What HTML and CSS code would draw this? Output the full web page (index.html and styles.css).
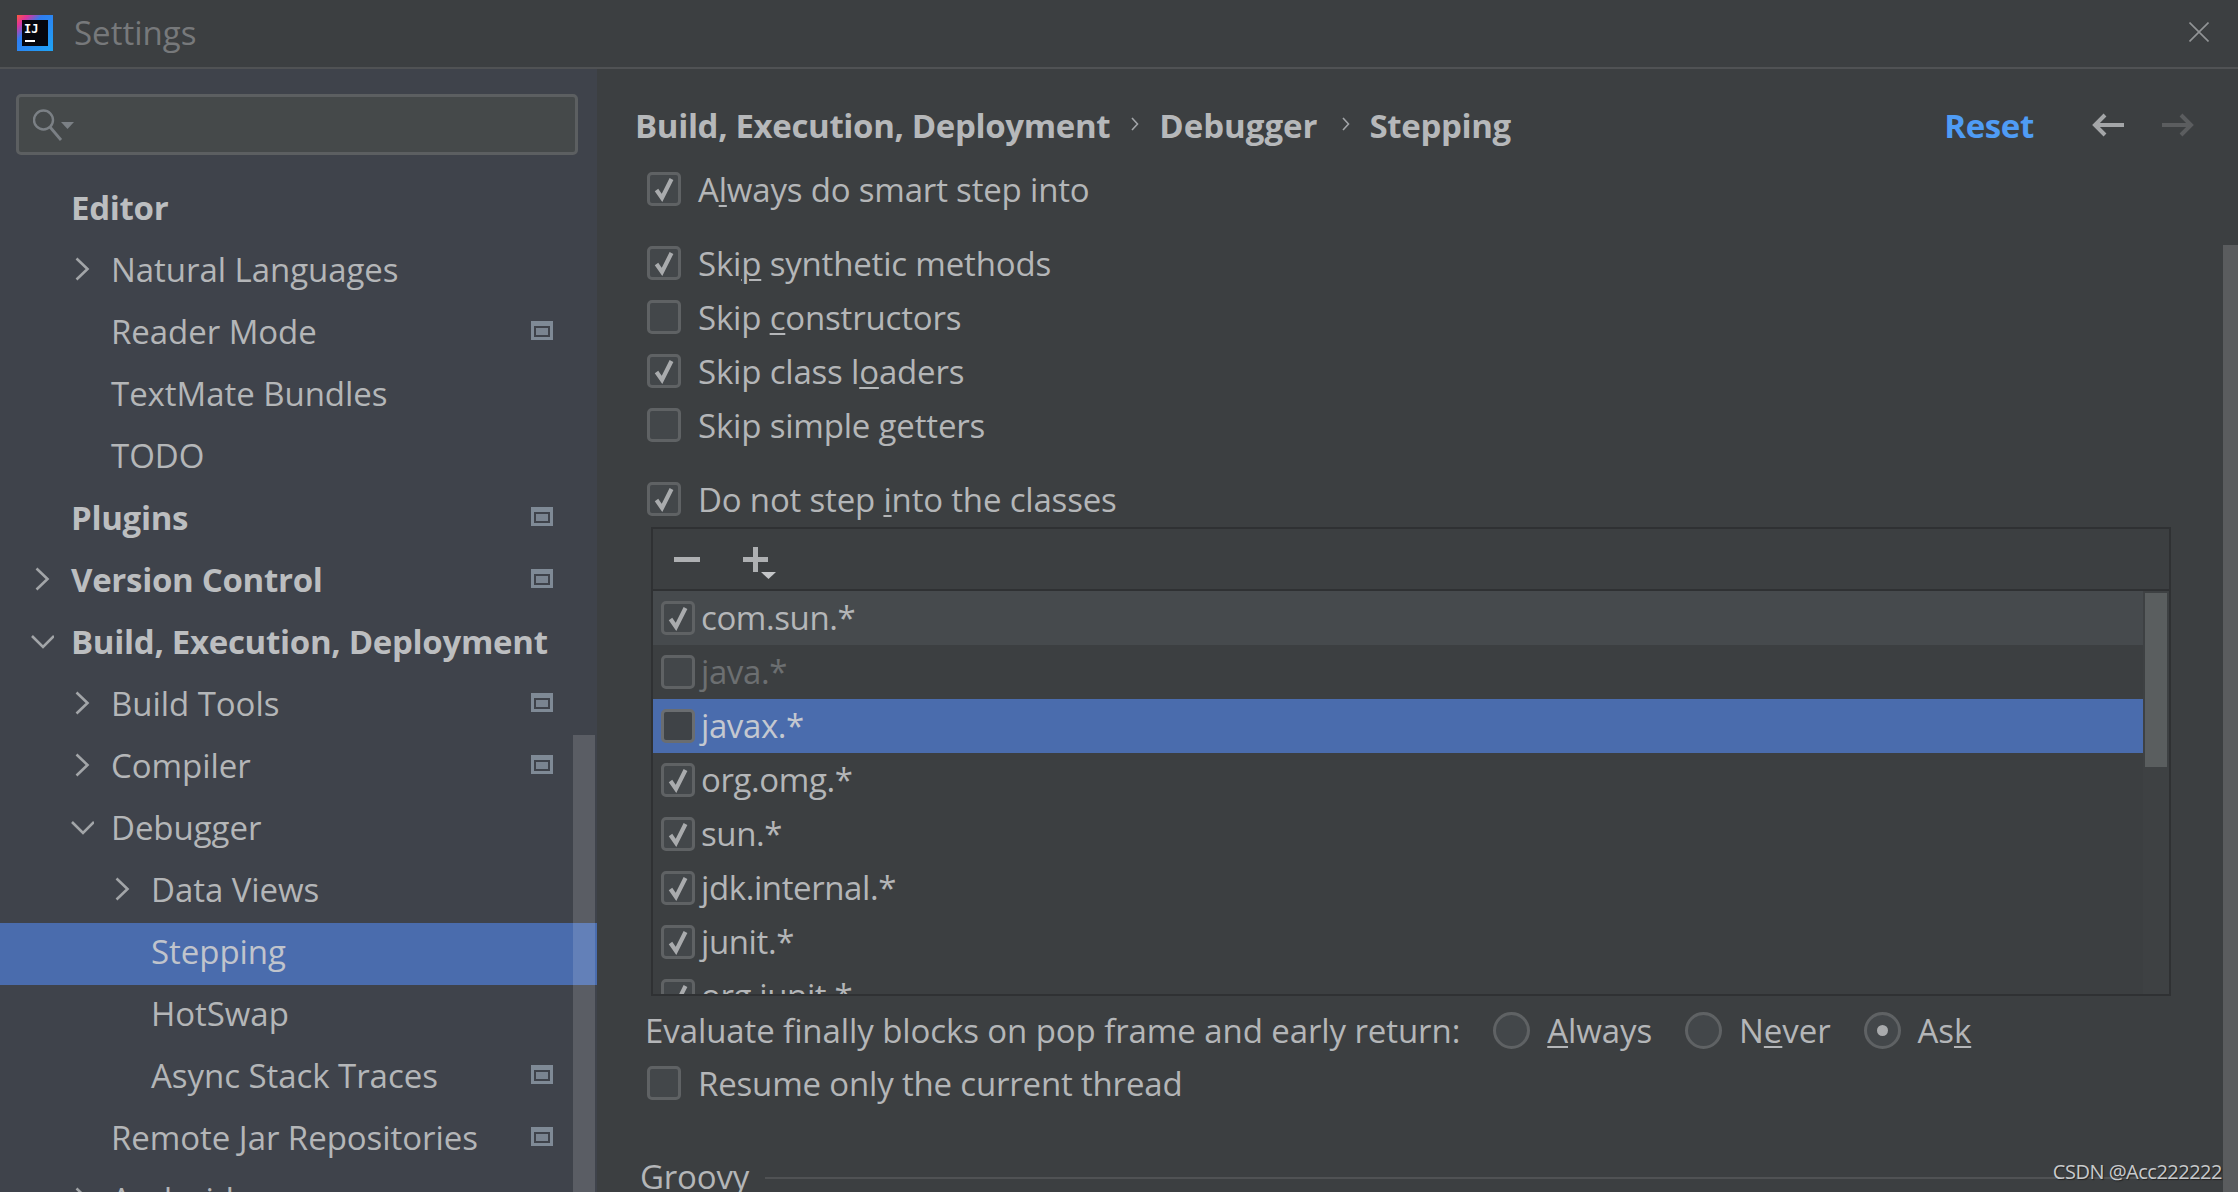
FILE: index.html
```html
<!DOCTYPE html>
<html lang="en">
<head>
<meta charset="utf-8">
<title>Settings</title>
<link rel="stylesheet" href="styles.css">
</head>
<body>
<svg class="defs" width="0" height="0" aria-hidden="true">
  <defs>
    <linearGradient id="logo-grad" x1="0" y1="0" x2="1" y2="1">
      <stop offset="0" stop-color="#ff5a3c"/>
      <stop offset="0.16" stop-color="#e0339a"/>
      <stop offset="0.36" stop-color="#2f7df0"/>
      <stop offset="1" stop-color="#1ea4f5"/>
    </linearGradient>
    <symbol id="chev-r" viewBox="0 0 24 24"><path d="M6.500 1.500 17.500 12 6.500 22.500" fill="none" stroke="#a2a5a8" stroke-width="2.600"/></symbol>
    <symbol id="chev-d" viewBox="0 0 24 24"><path d="M2 7 13 18 24 7" fill="none" stroke="#a2a5a8" stroke-width="2.600"/></symbol>
    <symbol id="cfg" viewBox="0 0 22 19"><rect width="22" height="19" fill="#7f8a96"/><rect x="3" y="5" width="16" height="11" fill="#3f434b"/><rect x="5" y="7" width="12" height="7" fill="#7a8490"/></symbol>
    <symbol id="tick" viewBox="0 0 34 34"><path d="M9.500 18 15 26 24.500 7" fill="none" stroke="#a9abad" stroke-width="4.200"/></symbol>
  </defs>
</svg>

<div class="window">
  <header class="titlebar">
    <svg class="logo" width="36" height="36" viewBox="0 0 36 36">
      <rect width="36" height="36" fill="url(#logo-grad)"/>
      <rect x="5" y="5" width="26" height="26" fill="#06060c"/>
      <text x="7" y="18" class="logo-text">IJ</text>
      <rect x="8" y="25" width="10" height="2" fill="#fff"/>
    </svg>
    <span class="title">Settings</span>
    <svg class="close" width="20" height="20" viewBox="0 0 20 20"><path d="M0.500 0.500 19.500 19.500M19.500 0.500 0.500 19.500" stroke="#929496" stroke-width="1.600"/></svg>
  </header>

  <div class="content">
    <aside class="sidebar">
      <div class="search">
        <svg width="44" height="34" viewBox="0 0 44 34">
          <circle cx="10.500" cy="11" r="9.500" fill="none" stroke="#7b8085" stroke-width="2.400"/>
          <path d="M17 18 28 31" stroke="#7b8085" stroke-width="2.800"/>
          <path d="M28 13H41L34.500 20Z" fill="#7b8085"/>
        </svg>
      </div>
      <nav class="tree">
        <div class="row l0 bold"><span class="slot"></span><span>Editor</span></div>
        <div class="row l1"><span class="slot"><svg class="chev"><use href="#chev-r"/></svg></span><span>Natural Languages</span></div>
        <div class="row l1"><span class="slot"></span><span>Reader Mode</span><svg class="cfg"><use href="#cfg"/></svg></div>
        <div class="row l1"><span class="slot"></span><span>TextMate Bundles</span></div>
        <div class="row l1"><span class="slot"></span><span>TODO</span></div>
        <div class="row l0 bold"><span class="slot"></span><span>Plugins</span><svg class="cfg"><use href="#cfg"/></svg></div>
        <div class="row l0 bold"><span class="slot"><svg class="chev"><use href="#chev-r"/></svg></span><span>Version Control</span><svg class="cfg"><use href="#cfg"/></svg></div>
        <div class="row l0 bold"><span class="slot"><svg class="chev"><use href="#chev-d"/></svg></span><span>Build, Execution, Deployment</span></div>
        <div class="row l1"><span class="slot"><svg class="chev"><use href="#chev-r"/></svg></span><span>Build Tools</span><svg class="cfg"><use href="#cfg"/></svg></div>
        <div class="row l1"><span class="slot"><svg class="chev"><use href="#chev-r"/></svg></span><span>Compiler</span><svg class="cfg"><use href="#cfg"/></svg></div>
        <div class="row l1"><span class="slot"><svg class="chev"><use href="#chev-d"/></svg></span><span>Debugger</span></div>
        <div class="row l2"><span class="slot"><svg class="chev"><use href="#chev-r"/></svg></span><span>Data Views</span></div>
        <div class="row l2 selected"><span class="slot"></span><span>Stepping</span></div>
        <div class="row l2"><span class="slot"></span><span>HotSwap</span></div>
        <div class="row l2"><span class="slot"></span><span>Async Stack Traces</span><svg class="cfg"><use href="#cfg"/></svg></div>
        <div class="row l1"><span class="slot"></span><span>Remote Jar Repositories</span><svg class="cfg"><use href="#cfg"/></svg></div>
        <div class="row l1"><span class="slot"><svg class="chev"><use href="#chev-r"/></svg></span><span>Android</span></div>
      </nav>
      <div class="side-scroll"></div>
    </aside>

    <main class="main">
      <div class="crumbs">
        <span class="crumb crumb-first">Build, Execution, Deployment</span>
        <svg class="sep sep-first" width="8" height="14" viewBox="0 0 8 14"><path d="M1 1 6.500 7 1 13" fill="none" stroke="#a2a5a8" stroke-width="1.600"/></svg>
        <span class="crumb crumb-second">Debugger</span>
        <svg class="sep" width="8" height="14" viewBox="0 0 8 14"><path d="M1 1 6.500 7 1 13" fill="none" stroke="#a2a5a8" stroke-width="1.600"/></svg>
        <span class="crumb">Stepping</span>
        <span class="reset">Reset</span>
        <svg class="arrow" width="32" height="24" viewBox="0 0 32 24"><path d="M32 12H3M13 2 3 12 13 22" fill="none" stroke="#a4a6a8" stroke-width="4"/></svg>
        <svg class="arrow arrow-next" width="32" height="24" viewBox="0 0 32 24"><path d="M0 12H29M19 2 29 12 19 22" fill="none" stroke="#5b5d5f" stroke-width="4"/></svg>
      </div>

      <div class="settings">
        <label class="check"><span class="box"><svg class="tick"><use href="#tick"/></svg></span><span>A<u>l</u>ways do smart step into</span></label>

        <div class="group">
          <label class="check"><span class="box"><svg class="tick"><use href="#tick"/></svg></span><span>Ski<u>p</u> synthetic methods</span></label>
          <label class="check"><span class="box"></span><span>Skip <u>c</u>onstructors</span></label>
          <label class="check"><span class="box"><svg class="tick"><use href="#tick"/></svg></span><span>Skip class l<u>o</u>aders</span></label>
          <label class="check"><span class="box"></span><span>Skip simple <u>g</u>etters</span></label>
        </div>

        <label class="check"><span class="box"><svg class="tick"><use href="#tick"/></svg></span><span>Do not step <u>i</u>nto the classes</span></label>

        <section class="table">
          <div class="toolbar">
            <svg width="26" height="5" viewBox="0 0 26 5"><rect width="26" height="5" fill="#aeb0b2"/></svg>
            <svg class="add" width="33" height="32" viewBox="0 0 33 32"><path d="M0 12.500H25M12.500 0V25" stroke="#aeb0b2" stroke-width="5"/><path d="M18 25H33L25.500 32Z" fill="#c4c6c8"/></svg>
          </div>
          <div class="list-wrap">
            <div class="list">
              <div class="item hover"><span class="box"><svg class="tick"><use href="#tick"/></svg></span><span class="item-text">com.sun.*</span></div>
              <div class="item off"><span class="box"></span><span class="item-text">java.*</span></div>
              <div class="item selected"><span class="box"></span><span class="item-text">javax.*</span></div>
              <div class="item"><span class="box"><svg class="tick"><use href="#tick"/></svg></span><span class="item-text">org.omg.*</span></div>
              <div class="item"><span class="box"><svg class="tick"><use href="#tick"/></svg></span><span class="item-text">sun.*</span></div>
              <div class="item"><span class="box"><svg class="tick"><use href="#tick"/></svg></span><span class="item-text">jdk.internal.*</span></div>
              <div class="item"><span class="box"><svg class="tick"><use href="#tick"/></svg></span><span class="item-text">junit.*</span></div>
              <div class="item"><span class="box"><svg class="tick"><use href="#tick"/></svg></span><span class="item-text">org.junit.*</span></div>
            </div>
            <div class="list-scroll"><div class="list-thumb"></div></div>
          </div>
        </section>

        <div class="radios">
          <span class="radio-label">Evaluate finally blocks on pop frame and early return:</span>
          <span class="radio"><span class="circle"></span><span><u>A</u>lways</span></span>
          <span class="radio"><span class="circle"></span><span>N<u>e</u>ver</span></span>
          <span class="radio"><span class="circle on"></span><span>As<u>k</u></span></span>
        </div>

        <label class="check check-last"><span class="box"></span><span>Resume only the current thread</span></label>

        <div class="groovy"><span>Groovy</span><span class="rule"></span></div>
      </div>
      <div class="main-scroll"></div>
    </main>
  </div>
  <div class="watermark">CSDN @Acc222222</div>
</div>
</body>
</html>
```
FILE: styles.css
```css
* { box-sizing: border-box; }
html, body { margin: 0; height: 100%; background: #3c3f41; }
body { overflow: hidden; font-family: "Open Sans", "Noto Sans", sans-serif; font-size: 33px; color: #b4b6b8; }
.defs { position: absolute; }
u { text-decoration-thickness: 2px; text-underline-offset: 3px; }

.window { position: relative; height: 1192px; display: flex; flex-direction: column; overflow: hidden; }

.titlebar { height: 69px; flex: none; display: flex; align-items: center; padding: 0 29px 2px 17px; border-bottom: 2px solid #505254; }
.logo-text { font-family: "DejaVu Sans Mono", monospace; font-weight: 700; font-size: 12px; letter-spacing: 0; fill: #fff; }
.title { margin-left: 21px; color: #77797b; }
.close { margin-left: auto; margin-bottom: 2px; }

.content { flex: 1; display: flex; min-height: 0; }

.sidebar { position: relative; width: 597px; flex: none; background: #3f434b; padding-top: 25px; overflow: hidden; letter-spacing: -0.05px; }
.search { height: 61px; margin: 0 19px 24px 16px; border: 3px solid #5c5f61; border-radius: 5px; background: #45494a; display: flex; align-items: center; padding-left: 14px; }
.search svg { margin-top: 2px; }

.row { height: 62px; display: flex; align-items: center; padding-right: 44px; padding-bottom: 6px; }
.row.bold { font-weight: 700; color: #bcbec0; letter-spacing: -0.3px; }
.l0 { padding-left: 30px; }
.l1 { padding-left: 70px; }
.l2 { padding-left: 110px; }
.slot { width: 41px; flex: none; display: flex; align-items: center; }
.chev { width: 24px; height: 24px; }
.cfg { width: 22px; height: 19px; margin-left: auto; margin-top: -1px; flex: none; }
.row.selected { background: #4a6cad; color: #c0c4cc; }

.side-scroll { position: absolute; right: 2px; top: 666px; bottom: 0; width: 22px; background: rgba(255, 255, 255, 0.14); }

.main { position: relative; flex: 1; min-width: 0; padding-left: 38px; }
.crumbs { height: 93px; padding: 19px 44px 0 0; display: flex; align-items: center; font-weight: 700; color: #b6b8ba; letter-spacing: -0.35px; }
.crumb-second { letter-spacing: 0; }
.sep { margin: 0 20px 2px 24px; }
.sep-first { margin-left: 21px; }
.reset { margin-left: auto; color: #4f9cf5; }
.arrow { margin-left: 58px; }
.arrow-next { margin-left: 38px; }

.settings { padding-left: 12px; letter-spacing: -0.18px; }
.check { height: 54px; display: flex; align-items: center; gap: 17px; }
.check-last { margin-top: -1px; }
.group { margin: 20px 0; }
.box { width: 34px; height: 34px; flex: none; border: 3px solid #5f6264; border-radius: 5px; background: #43474a; display: block; position: relative; }
.tick { position: absolute; left: -3px; top: -3px; width: 34px; height: 34px; }

.table { width: 1520px; margin: 1px 0 0 4px; height: 469px; border: 2px solid #2f3133; display: flex; flex-direction: column; }
.toolbar { height: 62px; flex: none; border-bottom: 2px solid #2f3133; display: flex; align-items: center; gap: 43px; padding-left: 21px; }
.add { margin: 7px 0 0 0; }
.list-wrap { flex: 1; display: flex; min-height: 0; }
.list { flex: 1; min-width: 0; overflow: hidden; }
.item { height: 54px; display: flex; align-items: center; gap: 6px; padding-left: 8px; letter-spacing: -0.4px; }
.item-text { margin-bottom: 2px; }
.item.hover { background: #464a4d; }
.item.off { color: #6c6f71; }
.item.selected { background: #4a6cad; color: #c4c8d0; }
.item.selected .box { border-color: #6a6d70; background: #3f4347; }
.list-scroll { width: 26px; flex: none; padding: 2px; background: #3e4143; }
.list-thumb { height: 174px; background: #5a5e5f; }

.radios { height: 54px; margin: 7px 0 0 -2px; display: flex; align-items: center; gap: 33px; letter-spacing: -0.09px; }
.radio { display: flex; align-items: center; gap: 17px; }
.circle { width: 37px; height: 37px; border: 3px solid #5f6264; border-radius: 50%; background: #43474a; display: block; position: relative; }
.circle.on::after { content: ""; position: absolute; left: 10px; top: 10px; width: 11px; height: 11px; border-radius: 50%; background: #a9abad; }

.groovy { height: 54px; margin: 39px 0 0 -7px; display: flex; align-items: center; gap: 16px; }
.rule { width: 1411px; height: 2px; margin-top: 4px; background: #505254; }

.main-scroll { position: absolute; right: 0; top: 176px; bottom: 0; width: 15px; background: #5a5c5e; }

.watermark { position: absolute; right: 16px; bottom: 7px; font-size: 20px; letter-spacing: -0.5px; color: #c8cacc; text-shadow: 1px 1px 1px #222; }
```
